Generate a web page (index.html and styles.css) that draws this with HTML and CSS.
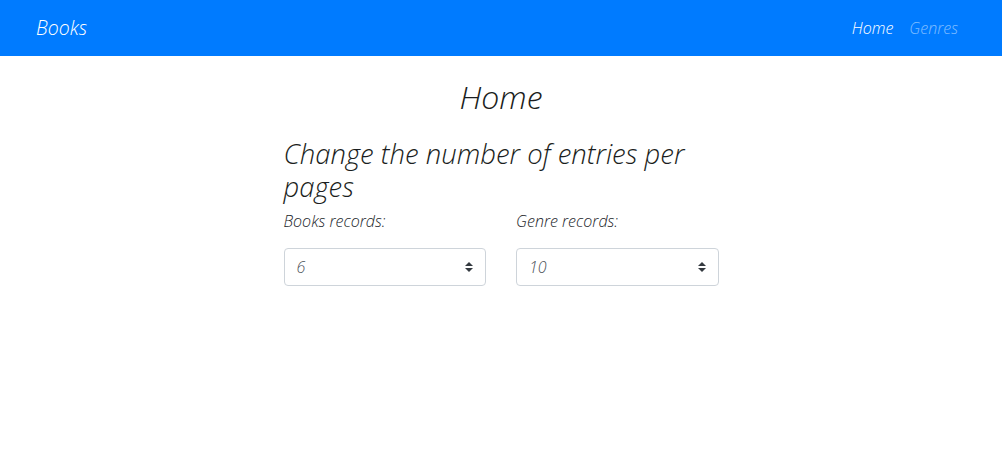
FILE: index.html
```html
<!DOCTYPE html>
<html lang="en">
<head>
<meta charset="utf-8">
<title>Books</title>
<link rel="stylesheet" href="styles.css">
</head>
<body>
<nav class="navbar">
  <div class="nav-inner">
    <a class="brand" href="#">Books</a>
    <ul class="nav-links">
      <li><a class="nav-link active" href="#">Home</a></li>
      <li><a class="nav-link" href="#">Genres</a></li>
    </ul>
  </div>
</nav>
<main class="main">
  <h1 class="page-title">Home</h1>
  <section class="content">
    <h3 class="section-title">Change the number of entries per pages</h3>
    <div class="form-row">
      <div class="field">
        <label class="field-label" for="books">Books records:</label>
        <div class="select">
          <span class="select-value">6</span>
          <svg class="select-arrow" width="8" height="10" viewBox="0 0 4 5"><path fill="#343a40" d="M2 0L0 2h4zm0 5L0 3h4z"/></svg>
        </div>
      </div>
      <div class="field">
        <label class="field-label" for="genres">Genre records:</label>
        <div class="select">
          <span class="select-value">10</span>
          <svg class="select-arrow" width="8" height="10" viewBox="0 0 4 5"><path fill="#343a40" d="M2 0L0 2h4zm0 5L0 3h4z"/></svg>
        </div>
      </div>
    </div>
  </section>
</main>
</body>
</html>
```

FILE: styles.css
```css
* { box-sizing: border-box; }
html, body { margin: 0; padding: 0; }
body {
  font-family: "Open Sans", "DejaVu Sans", sans-serif;
  font-style: italic;
  font-weight: 300;
  font-size: 16px;
  line-height: 1.5;
  color: #212529;
  background: #fff;
}
a { text-decoration: none; }

.navbar {
  background: #007bff;
  height: 56px;
}
.nav-inner {
  max-width: 960px;
  margin: 0 auto;
  height: 100%;
  padding: 0 15px;
  display: flex;
  align-items: center;
  justify-content: space-between;
}
.brand {
  color: #fff;
  font-size: 19.5px;
  line-height: 30px;
}
.nav-links {
  list-style: none;
  margin: 0;
  padding: 0;
  display: flex;
}
.nav-link {
  display: block;
  padding: 8px;
  color: rgba(255,255,255,.5);
}
.nav-link.active { color: #fff; }

.main {
  display: flex;
  flex-direction: column;
  align-items: center;
}
.page-title {
  margin: 22px 0 21px;
  font-size: 32px;
  font-weight: 300;
  line-height: 1.2;
  color: #1a1d20;
}
.content {
  width: 435px;
}
.section-title {
  margin: 0 0 6px;
  font-size: 27.5px;
  font-weight: 300;
  line-height: 1.2;
  color: #1a1d20;
}
.form-row {
  display: flex;
  gap: 30px;
}
.field {
  flex: 1;
}
.field-label {
  display: block;
  margin-bottom: 15px;
}
.select {
  height: 38px;
  border: 1px solid #ced4da;
  border-radius: 4px;
  padding: 6px 12px;
  display: flex;
  align-items: center;
  justify-content: space-between;
  color: #495057;
}
.select-arrow { display: block; }
```
